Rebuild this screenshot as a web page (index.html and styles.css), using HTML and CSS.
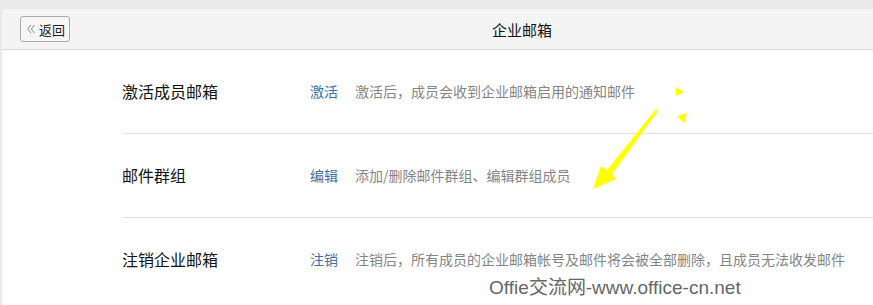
FILE: index.html
```html
<!DOCTYPE html>
<html lang="zh-CN">
<head>
    <meta charset="UTF-8">
    <meta name="viewport" content="width=device-width, initial-scale=1.0">
    <title>企业邮箱</title>
    <link rel="stylesheet" href="styles.css">
</head>
<body>
    <div class="page">
        <div class="header">
            <button class="backBtn">
                <svg class="backIcon" width="8" height="10" viewBox="0 0 8 10">
                    <polyline points="4,1 0.8,5 4,9" fill="none" stroke="#8a8a8a" stroke-width="1"/>
                    <polyline points="7.5,1 4.3,5 7.5,9" fill="none" stroke="#8a8a8a" stroke-width="1"/>
                </svg>返回</button>
            <h3 class="title">企业邮箱</h3>
        </div>

        <div class="list">
            <div class="row">
                <span class="label">激活成员邮箱</span>
                <a class="action" href="#">激活</a>
                <span class="desc">激活后，成员会收到企业邮箱启用的通知邮件</span>
            </div>
            <div class="row">
                <span class="label">邮件群组</span>
                <a class="action" href="#">编辑</a>
                <span class="desc">添加/删除邮件群组、编辑群组成员</span>
            </div>
            <div class="row">
                <span class="label">注销企业邮箱</span>
                <a class="action" href="#">注销</a>
                <span class="desc">注销后，所有成员的企业邮箱帐号及邮件将会被全部删除，且成员无法收发邮件</span>
            </div>
        </div>

        <!-- flecha amarilla encima -->
        <svg class="arrow" width="873" height="305" viewBox="0 0 873 305">
            <polygon points="676,87 676,96 684,92" fill="#ffff00"/>
            <polygon points="677,116 687,113 684,123" fill="#ffff00"/>
            <polygon points="593,189 601,166 607,170 656,109 658,111 612,174 616,179" fill="#ffff00"/>
        </svg>

        <div class="watermark">Offie交流网-www.office-cn.net</div>
    </div>
</body>
</html>
```

FILE: styles.css
```css
/* variables */
:root{
    --gris: #e8e9eb;
    --linea: #e2e2e2;
    --azul: #3f6ea6;
}
body{
    margin: 0;
    background-color: var(--gris);
    font-family: "Noto Sans CJK SC", "Noto Sans", sans-serif;
}
/* contenedor ppal */
.page{
    position: relative;
    margin: 9px 0 0 2px;
    height: 296px;
    background-color: #fff;
    overflow: hidden;
}
/* cabecera */
.header{
    height: 40px;
    display: flex;
    align-items: center;
    background-color: #f4f4f4;
    border-bottom: 1px solid #dcdcdc;
    padding-left: 18px;
}
.backBtn{
    width: 50px;
    height: 26px;
    padding: 0 0 0 6px;
    display: flex;
    align-items: center;
    gap: 4px;
    font-family: inherit;
    font-size: 13px;
    color: #222;
    background-color: #f7f7f7;
    border: 1px solid #aaa;
    border-radius: 3px;
}
.backIcon{
    flex-shrink: 0;
}
.title{
    margin: 0 0 0 422px;
    font-size: 15px;
    font-weight: 400;
    color: #111;
}
/* filas */
.list{
    padding-left: 120px;
}
.row{
    height: 81px;
    padding-bottom: 2px;
    display: flex;
    align-items: center;
    border-bottom: 1px solid var(--linea);
}
.row:last-child{
    border-bottom: none;
}
.label{
    width: 188px;
    font-size: 16px;
    color: #111;
}
.action{
    width: 45px;
    font-size: 14px;
    color: var(--azul);
    text-decoration: none;
}
.desc{
    font-size: 14px;
    color: #858585;
    white-space: nowrap;
}
/* encima */
.arrow{
    position: absolute;
    left: -2px;
    top: -9px;
    pointer-events: none;
}
.watermark{
    position: absolute;
    left: 487px;
    top: 263px;
    font-family: "Liberation Sans", Arial, sans-serif;
    font-size: 19px;
    color: #666;
}
```
